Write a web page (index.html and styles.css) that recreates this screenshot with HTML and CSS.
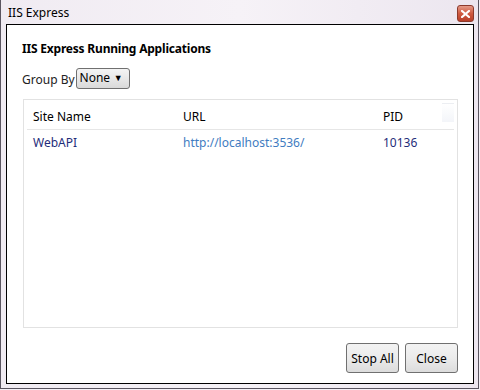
FILE: index.html
```html
<!DOCTYPE html>
<html lang="en">
<head>
    <meta charset="UTF-8">
    <title>IIS Express</title>
    <link rel="stylesheet" href="styles.css">
</head>
<body>
    <div class="window">
        <div class="titlebar">
            <span class="title">IIS Express</span>
            <span class="close-btn">
                <svg width="9" height="8" viewBox="0 0 9 8">
                    <path d="M1 1 L8 7 M8 1 L1 7" stroke="#fff" stroke-width="2.2" stroke-linecap="square"/>
                </svg>
            </span>
        </div>
        <div class="client">
            <h1>IIS Express Running Applications</h1>
            <div class="group-by">
                <label>Group By</label>
                <div class="select">None <span class="arrow">&#9660;</span></div>
            </div>
            <div class="list">
                <div class="list-head">
                    <div class="col col-name">Site Name</div>
                    <div class="col col-url">URL</div>
                    <div class="col col-pid">PID</div>
                    <div class="head-filler"></div>
                </div>
                <div class="list-row">
                    <div class="col col-name site">WebAPI</div>
                    <div class="col col-url"><a href="#">http://localhost:3536/</a></div>
                    <div class="col col-pid site">10136</div>
                </div>
            </div>
            <div class="actions">
                <button class="btn btn-stop">Stop All</button>
                <button class="btn btn-close">Close</button>
            </div>
        </div>
    </div>
</body>
</html>
```

FILE: styles.css
```css
body {
    margin: 0;
    background: #f3eff5;
    font-family: "Noto Sans", "Open Sans", sans-serif;
    font-size: 12px;
}
.window {
    width: 479px;
    height: 389px;
    box-sizing: border-box;
    border-left: 1px solid #5a5560;
    border-right: 1px solid #5a5560;
    border-bottom: 1px solid #5a5560;
    background: linear-gradient(to right, #f0ebf2, #f6f2f7 50%, #ece6ef);
    padding: 0 4px 4px 5px;
    display: flex;
    flex-direction: column;
}
.titlebar {
    height: 24px;
    display: flex;
    align-items: flex-start;
    justify-content: space-between;
}
.title {
    margin: 4px 0 0 2px;
    font-size: 12px;
    color: #000;
}
.close-btn {
    margin-top: 5px;
    width: 15px;
    height: 15px;
    border: 1px solid #8c3a2c;
    border-radius: 3px;
    background: linear-gradient(#e49a88, #cf5a40 50%, #b8402a);
    display: flex;
    align-items: center;
    justify-content: center;
}
.client {
    flex: 1;
    background: #fff;
    border: 1px solid #000;
    padding: 15px 15px 10px 15px;
    display: flex;
    flex-direction: column;
}
h1 {
    margin: 0;
    font-size: 12px;
    font-weight: bold;
    letter-spacing: -0.2px;
    color: #000;
}
.group-by {
    display: flex;
    align-items: flex-end;
    margin-top: 11px;
}
.group-by label {
    color: #222;
    padding-bottom: 1px;
}
.select {
    margin-left: 1px;
    width: 54px;
    height: 21px;
    box-sizing: border-box;
    border: 1px solid #707070;
    border-radius: 3px;
    background: linear-gradient(#f4f4f4, #e8e8e8 50%, #d9d9d9);
    padding: 0 0 2px 3px;
    display: flex;
    align-items: center;
    justify-content: space-between;
    color: #000;
}
.arrow {
    font-size: 9px;
    margin-right: 6px;
}
.list {
    margin-top: 10px;
    margin-left: 1px;
    height: 229px;
    border: 1px solid #e2e2e2;
    padding: 3px 3px 0 3px;
    box-sizing: border-box;
}
.list-head,
.list-row {
    display: flex;
    align-items: center;
}
.list-head {
    height: 26px;
    border-bottom: 1px solid #e6e6e6;
    position: relative;
}
.list-row {
    height: 24px;
}
.col {
    flex: none;
}
.col-name {
    width: 150px;
    padding-left: 6px;
}
.col-url {
    width: 200px;
}
.site {
    color: #1f2d7a;
}
a {
    color: #3f7cc1;
    text-decoration: none;
}
.head-filler {
    position: absolute;
    right: 0;
    top: 0;
    width: 12px;
    height: 18px;
    border-top: 1px solid #eceef2;
    background: linear-gradient(#ffffff, #f3f5f9);
}
.actions {
    margin-top: auto;
    display: flex;
    justify-content: flex-end;
    gap: 6px;
}
.btn {
    height: 30px;
    border: 1px solid #707070;
    border-radius: 3px;
    background: linear-gradient(#f3f3f3, #ebebeb 50%, #dcdcdc);
    font-family: inherit;
    font-size: 12px;
    color: #000;
    padding: 0;
}
.btn-stop {
    width: 53px;
}
.btn-close {
    width: 53px;
}
```
